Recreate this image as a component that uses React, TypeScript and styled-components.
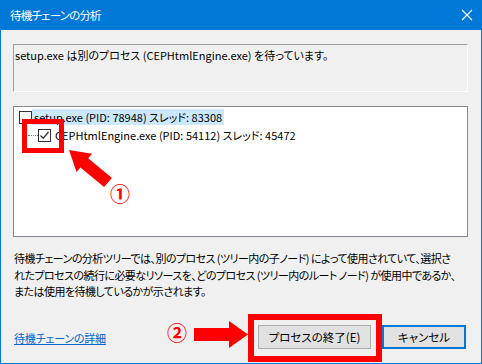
import React from 'react';
import styled, { createGlobalStyle } from 'styled-components';

const accent = '#0078d7';
const red = '#ff0000';

const GlobalStyle = createGlobalStyle`
  html, body {
    margin: 0;
    padding: 0;
    background: #ffffff;
  }
  * {
    box-sizing: border-box;
  }
`;

const Window = styled.div`
  position: relative;
  width: 482px;
  height: 364px;
  background: #f0f0f0;
  border: 1px solid ${accent};
  border-top: none;
  display: flex;
  flex-direction: column;
  font-family: 'Noto Sans CJK JP', 'Noto Sans', sans-serif;
  font-feature-settings: 'palt';
  font-size: 11px;
  color: #000;
  overflow: hidden;
`;

const TitleBar = styled.div`
  height: 30px;
  margin: 0 -1px;
  background: ${accent};
  color: #fff;
  display: flex;
  align-items: center;
  justify-content: space-between;
  padding: 0 9px 0 10px;
`;

const Title = styled.span`
  font-size: 11.5px;
  letter-spacing: -0.8px;
`;

const Body = styled.div`
  flex: 1;
  display: flex;
  flex-direction: column;
  padding: 14px 13px 0 12px;
`;

const MessageBox = styled.div`
  height: 48px;
  border-top: 1px solid #a0a0a0;
  border-left: 1px solid #a0a0a0;
  border-bottom: 1px solid #fff;
  border-right: 1px solid #fff;
  padding: 2px 1px;
  line-height: 16px;
`;

const TreeBox = styled.div`
  margin-top: 14px;
  height: 131px;
  background: #fff;
  border: 1px solid #828790;
  padding: 1px 0 0 4px;
  display: flex;
  flex-direction: column;
`;

const TreeRow = styled.div<{ $indent: number }>`
  height: 18px;
  display: flex;
  align-items: center;
  padding-left: ${(p) => p.$indent}px;
  white-space: nowrap;
`;

const Connector = styled.span`
  width: 10px;
  height: 1px;
  border-top: 1px dotted #808080;
`;

const Box = styled.span`
  width: 13px;
  height: 13px;
  border: 1px solid #333;
  background: #fff;
  display: flex;
  align-items: center;
  justify-content: center;
  flex: none;
`;

const Label = styled.span<{ $selected?: boolean }>`
  margin-left: ${(p) => (p.$selected ? 0 : 2)}px;
  padding: 0 2px;
  height: 16px;
  line-height: 16px;
  background: ${(p) => (p.$selected ? '#cce8ff' : 'transparent')};
`;

const Description = styled.p`
  margin: 13px 0 0 1px;
  line-height: 16.5px;
  letter-spacing: -0.55px;
  white-space: nowrap;
`;

const Footer = styled.div`
  margin-top: 25px;
  display: flex;
  align-items: center;
  padding-left: 1px;
`;

const DetailLink = styled.a`
  color: #0066cc;
  text-decoration: underline;
  cursor: pointer;
  margin-top: 2px;
  letter-spacing: -0.2px;
`;

const ButtonRow = styled.div`
  margin-left: auto;
  margin-right: 2px;
  display: flex;
  gap: 11px;
`;

const Button = styled.button<{ $default?: boolean; $width: number }>`
  width: ${(p) => p.$width}px;
  height: 24px;
  background: #e1e1e1;
  border: ${(p) => (p.$default ? `2px solid ${accent}` : '1px solid #adadad')};
  font-family: inherit;
  font-feature-settings: 'palt';
  font-size: 11.5px;
  color: #000;
  padding: 0;
`;

const Highlight = styled.div<{ $x: number; $y: number; $w: number; $h: number; $t: number }>`
  position: absolute;
  left: ${(p) => p.$x}px;
  top: ${(p) => p.$y}px;
  width: ${(p) => p.$w}px;
  height: ${(p) => p.$h}px;
  border: ${(p) => p.$t}px solid ${red};
  pointer-events: none;
`;

const Marker = styled.span<{ $x: number; $y: number }>`
  position: absolute;
  left: ${(p) => p.$x}px;
  top: ${(p) => p.$y}px;
  color: ${red};
  font-size: 20px;
  font-weight: 700;
  line-height: 20px;
  font-feature-settings: normal;
`;

const Overlay = styled.svg`
  position: absolute;
  left: 0;
  top: 0;
  pointer-events: none;
`;

function Check() {
  return (
    <svg width="11" height="11" viewBox="0 0 11 11">
      <path d="M1.5 5.5 L4.2 8.2 L9.5 2" fill="none" stroke="#333" strokeWidth="1.3" />
    </svg>
  );
}

function CloseIcon() {
  return (
    <svg width="12" height="12" viewBox="0 0 12 12">
      <path d="M1 1 L11 11 M11 1 L1 11" stroke="#fff" strokeWidth="1.1" />
    </svg>
  );
}

export default function App() {
  return (
    <>
      <GlobalStyle />
      <Window>
        <TitleBar>
          <Title>待機チェーンの分析</Title>
          <CloseIcon />
        </TitleBar>
        <Body>
          <MessageBox>setup.exe は別のプロセス (CEPHtmlEngine.exe) を待っています。</MessageBox>
          <TreeBox>
            <TreeRow $indent={1}>
              <Box />
              <Label $selected>setup.exe (PID: 78948) スレッド: 83308</Label>
            </TreeRow>
            <TreeRow $indent={10}>
              <Connector />
              <Box>
                <Check />
              </Box>
              <Label>CEPHtmlEngine.exe (PID: 54112) スレッド: 45472</Label>
            </TreeRow>
          </TreeBox>
          <Description>
            待機チェーンの分析ツリーでは、別のプロセス (ツリー内の子ノード) によって使用されていて、選択さ
            <br />
            れたプロセスの続行に必要なリソースを、どのプロセス (ツリー内のルート ノード) が使用中であるか、
            <br />
            または使用を待機しているかが示されます。
          </Description>
          <Footer>
            <DetailLink>待機チェーンの詳細</DetailLink>
            <ButtonRow>
              <Button $width={113}>プロセスの終了(E)</Button>
              <Button $width={84} $default>
                キャンセル
              </Button>
            </ButtonRow>
          </Footer>
        </Body>

        <Highlight $x={21} $y={119} $w={42} $h={34} $t={5} />
        <Highlight $x={247} $y={314} $w={134} $h={48} $t={6} />
        <Overlay width="482" height="364" viewBox="0 0 482 364">
          <polygon
            points="68,150 91,153.7 87.2,158.3 110.9,177.9 103.1,187.1 79.4,167.5 75.5,172.1"
            fill={red}
          />
          <polygon points="193,328 228,328 228,321 247,334.5 228,348 228,341 193,341" fill={red} />
        </Overlay>
        <Marker $x={109} $y={184}>①</Marker>
        <Marker $x={166} $y={323}>②</Marker>
      </Window>
    </>
  );
}
